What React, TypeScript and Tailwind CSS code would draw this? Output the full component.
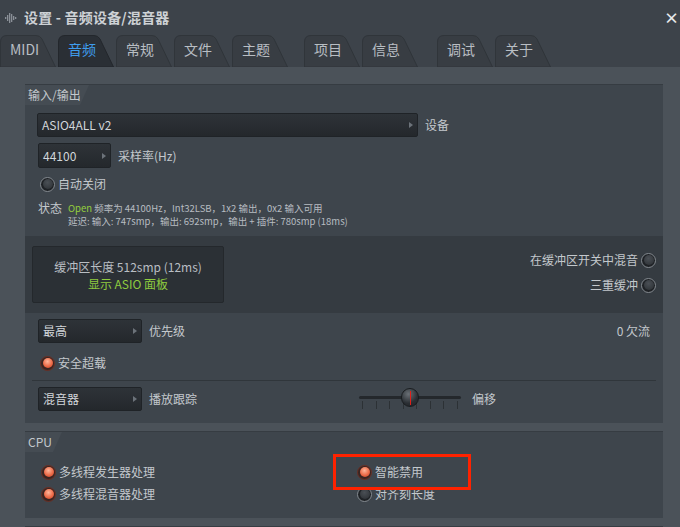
import React from 'react';

const font = { fontFamily: '"Noto Sans CJK SC", "Noto Sans", sans-serif' };

function Tab({ label, width, active = false }: { label: string; width: number; active?: boolean }) {
  const w = width;
  return (
    <div className="relative h-[32px] flex items-center" style={{ width: w }}>
      <svg className="absolute inset-0" width={w} height={32} viewBox={`0 0 ${w} 32`}>
        <path
          d={`M0.5 32 V7 Q0.5 0.5 7 0.5 H${w - 20} Q${w - 16} 0.5 ${w - 14} 4 L${w - 0.5} 32 Z`}
          fill={active ? '#2a2f35' : '#383d43'}
          stroke={active ? '#23272c' : '#30353a'}
        />
      </svg>
      <span className={`relative pl-[10px] mt-[-3px] text-[14px] ${active ? 'text-[#3f9ded]' : 'text-[#b9bec3]'}`}>{label}</span>
    </div>
  );
}

function Radio({ on = false, label, reverse = false }: { on?: boolean; label: string; reverse?: boolean }) {
  const dot = (
    <span
      className={`w-[15px] h-[15px] rounded-full border-[1.5px] shrink-0 flex items-center justify-center ${
        on ? 'border-[#6a3026] bg-[#3a2522]' : 'border-[#858b91] bg-[#1f2226]'
      }`}
    >
      <span
        className={`w-[10px] h-[10px] rounded-full ${
          on ? 'bg-[radial-gradient(circle_at_45%_35%,#ffb59a,#ee6b48_55%,#b83a22)]' : 'bg-[radial-gradient(circle_at_45%_35%,#4a4f55,#2a2e32)]'
        }`}
      />
    </span>
  );
  return (
    <div className="flex items-center gap-[3px] text-[12px] text-[#c3c8cc] h-[18px]">
      {reverse ? (
        <>
          <span>{label}</span>
          {dot}
        </>
      ) : (
        <>
          {dot}
          <span>{label}</span>
        </>
      )}
    </div>
  );
}

function Dropdown({ text, w, h = 24 }: { text: string; w: number; h?: number }) {
  return (
    <div
      className="flex items-center justify-between pl-[4px] pr-[4px] rounded-[2px] border border-[#1f2327] bg-[linear-gradient(#2e3338,#24282c)] text-[12px] text-[#d2d6da]"
      style={{ width: w, height: h }}
    >
      <span>{text}</span>
      <span className="w-0 h-0 border-y-[3px] border-y-transparent border-l-[4px] border-l-[#6c737a]" />
    </div>
  );
}

function PanelLabel({ text, w }: { text: string; w: number }) {
  return (
    <div className="relative h-[20px] flex items-center" style={{ width: w }}>
      <svg className="absolute inset-0" width={w} height={20} viewBox={`0 0 ${w} 20`}>
        <path d={`M0 0 H${w} L${w - 9} 20 H0 Z`} fill="#454c53" />
      </svg>
      <span className="relative pl-[3px] text-[12px] text-[#c3c8cc]">{text}</span>
    </div>
  );
}

function Slider() {
  return (
    <div className="relative w-[102px] h-[24px]">
      <div className="absolute left-0 right-0 top-[9px] h-[3px] rounded-full bg-[#24282c]" />
      <div className="absolute left-[3px] right-[3px] top-[14px] h-[8px] flex justify-between">
        {[0, 1, 2, 3, 4, 5, 6, 7].map((i) => (
          <span key={i} className="w-px h-full bg-[#2c3135]" />
        ))}
      </div>
      <div className="absolute left-[42px] top-[1px] w-[18px] h-[19px] rounded-full bg-[radial-gradient(circle_at_40%_30%,#6a7076,#2a2e33_60%,#1d2024)] border border-[#1a1d20] flex justify-center">
        <span className="w-px h-[14px] mt-[2px] bg-[#e0201a]" />
      </div>
    </div>
  );
}

export default function App() {
  return (
    <div className="w-[680px] h-[527px] overflow-hidden bg-[#3d434a] flex flex-col" style={font}>
      {/* title */}
      <div className="h-[35px] flex items-center pl-[4px] shrink-0">
        <svg width="14" height="12" viewBox="0 0 14 12" className="mr-[6px]">
          {[
            [1, 5, 2],
            [3, 3, 6],
            [5, 1, 10],
            [7, 2, 8],
            [9, 4, 4],
            [11, 5, 2],
          ].map(([x, y, h], i) => (
            <rect key={i} x={x} y={y} width="1.3" height={h} fill="#8a9097" />
          ))}
        </svg>
        <span className="text-[14px] text-[#cdd1d5] font-bold tracking-[0.2px]">设置 - 音频设备/混音器</span>
        <span className="ml-auto mr-[1px] text-[15px] leading-none font-bold text-[#e8eaec]">×</span>
      </div>

      {/* tabs */}
      <div className="h-[32px] flex items-end shrink-0">
        <div className="flex gap-[2px]">
          <Tab label="MIDI" width={56} />
          <Tab label="音频" width={56} active />
          <Tab label="常规" width={56} />
          <Tab label="文件" width={56} />
          <Tab label="主题" width={56} />
        </div>
        <div className="flex gap-[2px] ml-[16px]">
          <Tab label="项目" width={56} />
          <Tab label="信息" width={56} />
        </div>
        <div className="flex gap-[2px] ml-[19px]">
          <Tab label="调试" width={56} />
          <Tab label="关于" width={56} />
        </div>
      </div>

      {/* content */}
      <div className="flex-1 bg-[#4b5259] pl-[25px] pr-[17px] pt-[17px] flex flex-col gap-[8px]">
        {/* I/O panel */}
        <div className="h-[339px] bg-[#3e454c] border-t border-[#363c42] flex flex-col shrink-0">
          <PanelLabel text="输入/输出" w={64} />
          <div className="flex items-center gap-[7px] mt-[8px] pl-[12px]">
            <Dropdown text="ASIO4ALL v2" w={381} />
            <span className="text-[12px] text-[#c3c8cc]">设备</span>
          </div>
          <div className="flex items-center gap-[7px] mt-[6px] pl-[13px]">
            <Dropdown text="44100" w={73} h={25} />
            <span className="text-[12px] text-[#c3c8cc]">采样率(Hz)</span>
          </div>
          <div className="mt-[7px] pl-[15px]">
            <Radio label="自动关闭" />
          </div>
          <div className="mt-[9px] pl-[13px] flex items-start gap-[6px]">
            <span className="text-[12px] text-[#c3c8cc] leading-[14px] mt-[-1px]">状态</span>
            <div className="text-[9.5px] leading-[13px] text-[#b7bcc1]">
              <div>
                <span className="text-[#95cf3c]">Open</span> 频率为 44100Hz，Int32LSB，1x2 输出，0x2 输入可用
              </div>
              <div>延迟: 输入: 747smp，输出: 692smp，输出 + 插件: 780smp (18ms)</div>
            </div>
          </div>

          {/* buffer area */}
          <div className="mt-[8px] h-[77px] bg-[#353b41] flex items-center pl-[7px] pr-[7px]">
            <div className="w-[192px] h-[57px] rounded-[2px] border border-[#24282c] bg-[#2b3035] flex flex-col items-center justify-center text-[12px] leading-[17px]">
              <span className="text-[#b9bec3]">缓冲区长度 512smp (12ms)</span>
              <span className="text-[#8fcb3f]">显示 ASIO 面板</span>
            </div>
            <div className="ml-auto flex flex-col items-end gap-[7px] mt-[-4px]">
              <Radio label="在缓冲区开关中混音" reverse />
              <Radio label="三重缓冲" reverse />
            </div>
          </div>

          <div className="mt-[6px] pl-[13px] pr-[13px] flex items-center gap-[7px]">
            <Dropdown text="最高" w={104} />
            <span className="text-[12px] text-[#c3c8cc]">优先级</span>
            <span className="ml-auto text-[12px] text-[#c3c8cc]">0 欠流</span>
          </div>
          <div className="mt-[11px] pl-[15px]">
            <Radio on label="安全超载" />
          </div>
          <div className="mt-[8px] mx-[7px] h-px bg-[#30363b]" />
          <div className="mt-[6px] pl-[13px] flex items-center">
            <Dropdown text="混音器" w={104} />
            <span className="ml-[7px] text-[12px] text-[#c3c8cc] w-[210px]">播放跟踪</span>
            <Slider />
            <span className="ml-[11px] text-[12px] text-[#c3c8cc]">偏移</span>
          </div>
        </div>

        {/* CPU panel */}
        <div className="relative h-[87px] bg-[#3e454c] border-t border-[#363c42] flex flex-col shrink-0">
          <PanelLabel text="CPU" w={37} />
          <div className="mt-[11px] pl-[16px] flex">
            <div className="w-[316px] flex flex-col gap-[4px]">
              <Radio on label="多线程发生器处理" />
              <Radio on label="多线程混音器处理" />
            </div>
            <div className="flex flex-col gap-[4px]">
              <Radio on label="智能禁用" />
              <Radio label="对齐刻长度" />
            </div>
          </div>
          <div className="absolute left-[308px] top-[22px] w-[138px] h-[36px] border-[3px] border-[#ff2200]" />
        </div>

        <div className="h-[10px] bg-[#3e454c] border-t border-[#363c42] shrink-0" />
      </div>
    </div>
  );
}
